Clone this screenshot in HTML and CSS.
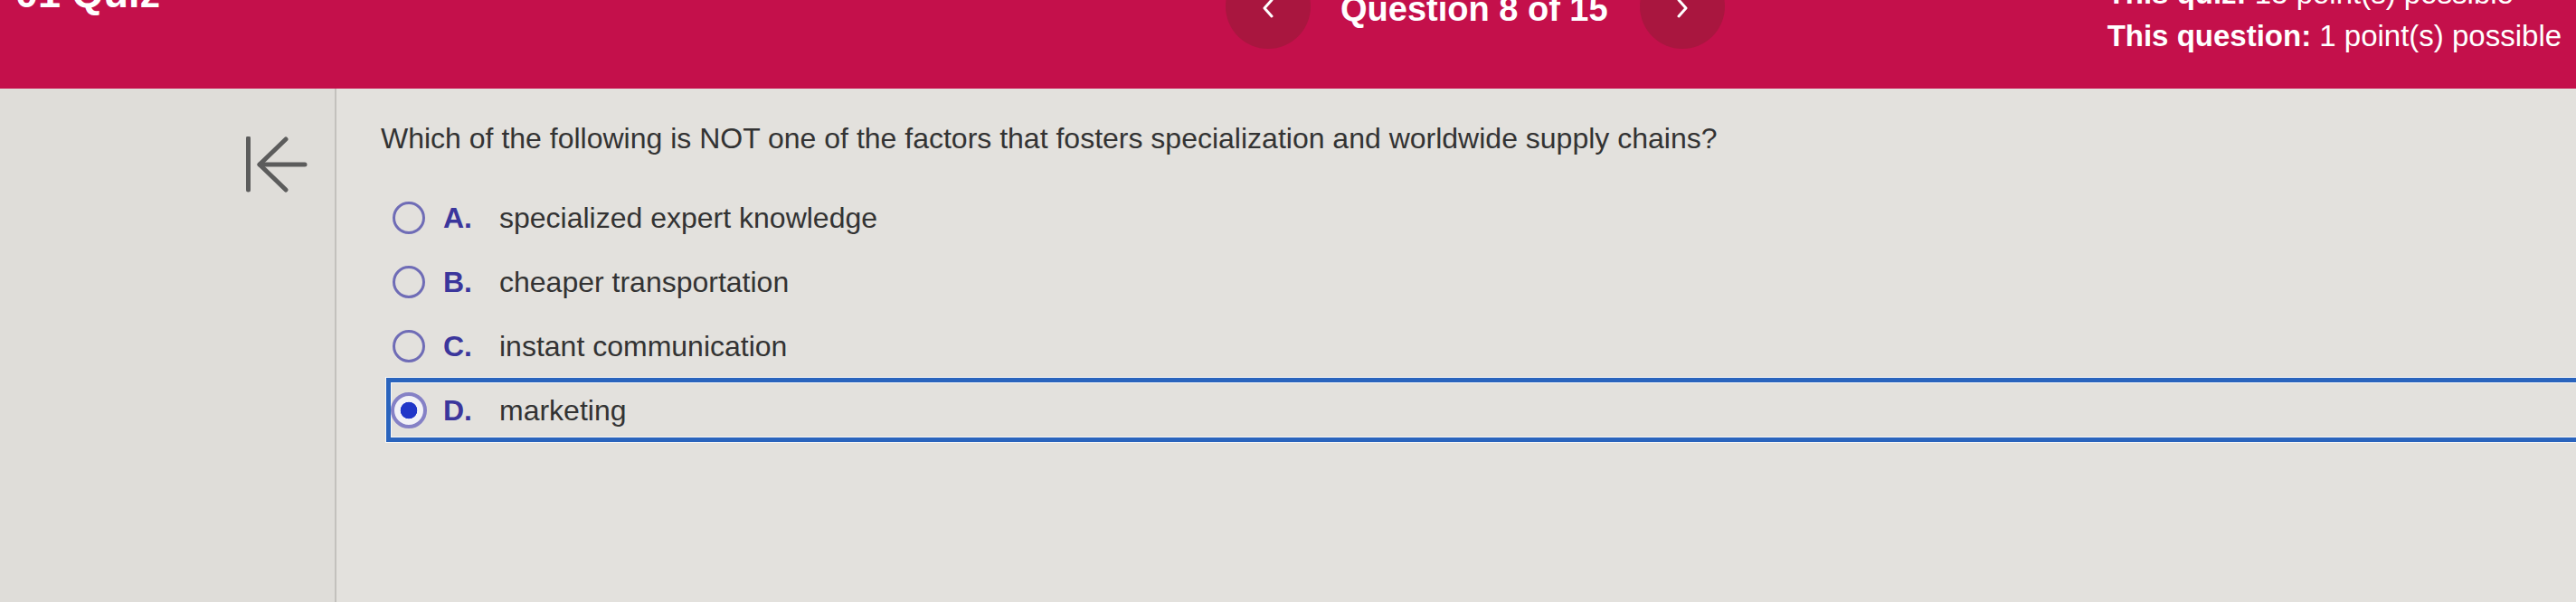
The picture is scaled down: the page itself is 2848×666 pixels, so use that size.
FILE: index.html
```html
<!DOCTYPE html>
<html lang="en">
<head>
<meta charset="utf-8">
<title>Quiz</title>
<link rel="stylesheet" href="styles.css">
</head>
<body>
<header class="topbar">
  <div class="title">01 Quiz</div>
  <nav class="qnav">
    <button class="navbtn" aria-label="Previous question">
      <svg class="chev" width="16" height="24" viewBox="0 0 16 24"><polyline points="12,3 4,12 12,21" fill="none" stroke="#fff" stroke-width="3" stroke-linecap="round" stroke-linejoin="round"/></svg>
    </button>
    <span class="qcount">Question 8 of 15</span>
    <button class="navbtn" aria-label="Next question">
      <svg class="chev" width="16" height="24" viewBox="0 0 16 24"><polyline points="4,3 12,12 4,21" fill="none" stroke="#fff" stroke-width="3" stroke-linecap="round" stroke-linejoin="round"/></svg>
    </button>
  </nav>
  <div class="points">
    <div><b>This quiz:</b> 15 point(s) possible</div>
    <div><b>This question:</b> 1 point(s) possible</div>
  </div>
</header>
<main class="main">
  <aside class="side">
    <svg class="back-icon" width="72" height="62" viewBox="0 0 72 62">
      <line x1="6.5" y1="2" x2="6.5" y2="59" stroke="#5c5c5c" stroke-width="5" stroke-linecap="round"/>
      <polyline points="48,3 19,31 48,59" fill="none" stroke="#5c5c5c" stroke-width="5" stroke-linecap="round" stroke-linejoin="round"/>
      <line x1="19" y1="31" x2="69" y2="31" stroke="#5c5c5c" stroke-width="5" stroke-linecap="round"/>
    </svg>
  </aside>
  <section class="content">
    <p class="question">Which of the following is NOT one of the factors that fosters specialization and worldwide supply chains?</p>
    <ul class="options">
      <li class="option"><span class="radio"></span><span class="letter">A.</span><span class="text">specialized expert knowledge</span></li>
      <li class="option"><span class="radio"></span><span class="letter">B.</span><span class="text">cheaper transportation</span></li>
      <li class="option"><span class="radio"></span><span class="letter">C.</span><span class="text">instant communication</span></li>
      <li class="option selected"><span class="radio"></span><span class="letter">D.</span><span class="text">marketing</span></li>
    </ul>
  </section>
</main>
</body>
</html>
```
FILE: styles.css
```css
html, body {
  margin: 0;
  height: 100%;
  overflow: hidden;
}

body {
  font-family: "Liberation Sans", Arial, sans-serif;
  background: #e3e1dd;
  color: #333;
}

.topbar {
  height: 98px;
  box-sizing: border-box;
  background: #c4104b;
  color: #fff;
  display: flex;
  align-items: flex-start;
  padding-left: 17px;
  overflow: hidden;
}

.title {
  flex: 0 0 1338px;
  font-size: 45px;
  font-weight: bold;
  line-height: 45px;
  margin-top: -30px;
}

.qnav {
  display: flex;
  align-items: center;
  margin-top: -40px;
}

.navbtn {
  width: 94px;
  height: 94px;
  border: 0;
  padding: 0;
  border-radius: 50%;
  background: #a9163f;
  display: flex;
  align-items: center;
  justify-content: center;
}

.chev {
  margin-top: 4px;
}

.qcount {
  font-size: 38px;
  font-weight: bold;
  line-height: 38px;
  margin: 5px 35px 0 33px;
  white-space: nowrap;
}

.points {
  margin-left: 423px;
  margin-top: -31px;
  font-size: 33px;
  line-height: 47px;
  white-space: nowrap;
}

.main {
  display: grid;
  grid-template-columns: 372px 1fr;
  height: calc(100% - 98px);
}

.side {
  background: #dfddd9;
  border-right: 2px solid #c3c1bd;
  box-sizing: border-box;
  padding: 53px 0 0 268px;
}

.back-icon {
  display: block;
}

.content {
  padding: 35px 0 0 49px;
  overflow: hidden;
}

.question {
  margin: 0;
  font-size: 32px;
  line-height: 40px;
  color: #333;
  white-space: nowrap;
}

.options {
  list-style: none;
  margin: 32px -20px 0 6px;
  padding: 0;
}

.option {
  display: flex;
  align-items: center;
  height: 71px;
  box-sizing: border-box;
  border: 5px solid transparent;
  font-size: 32px;
  line-height: 40px;
}

.option.selected {
  border-color: #2a64bd;
  box-shadow: inset 0 0 0 1px rgba(255, 255, 255, 0.7), 0 0 0 1px rgba(255, 255, 255, 0.7);
}

.radio {
  flex: none;
  width: 40px;
  height: 40px;
  display: flex;
  align-items: center;
  justify-content: center;
}

.radio::before {
  content: "";
  width: 30px;
  height: 30px;
  border: 3px solid #6f6cb6;
  border-radius: 50%;
}

.selected .radio::before {
  width: 32px;
  height: 32px;
  border: 4px solid #8581c6;
  background: radial-gradient(circle, #2036c8 0 9px, #f2f2f7 9.6px);
}

.letter {
  flex: none;
  width: 62px;
  margin-left: 18px;
  font-weight: bold;
  color: #3b369c;
}

.text {
  color: #333;
  white-space: nowrap;
}
```
